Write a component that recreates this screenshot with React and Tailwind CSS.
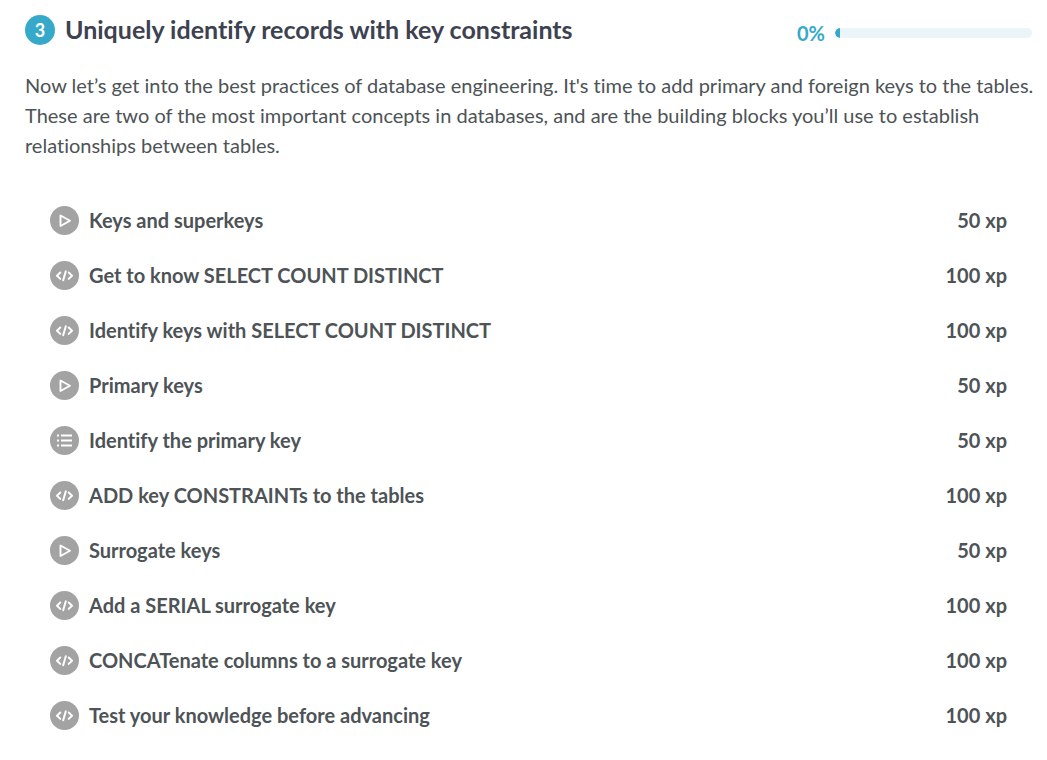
const exercises = [
  { kind: 'video', title: 'Keys and superkeys', xp: 50 },
  { kind: 'code', title: 'Get to know SELECT COUNT DISTINCT', xp: 100 },
  { kind: 'code', title: 'Identify keys with SELECT COUNT DISTINCT', xp: 100 },
  { kind: 'video', title: 'Primary keys', xp: 50 },
  { kind: 'list', title: 'Identify the primary key', xp: 50 },
  { kind: 'code', title: 'ADD key CONSTRAINTs to the tables', xp: 100 },
  { kind: 'video', title: 'Surrogate keys', xp: 50 },
  { kind: 'code', title: 'Add a SERIAL surrogate key', xp: 100 },
  { kind: 'code', title: 'CONCATenate columns to a surrogate key', xp: 100 },
  { kind: 'code', title: 'Test your knowledge before advancing', xp: 100 },
];

function ExerciseIcon({ kind }) {
  return (
    <svg className="h-[31px] w-[29px] shrink-0" viewBox="0 -2 29 31" fill="none" stroke="#fff" aria-hidden="true">
      <circle cx="14.5" cy="14.5" r="14.5" fill="#a3a3a3" stroke="none" />
      {kind === 'video' && <path d="M10.5 9.500v10.500l9.500-5.250z" strokeWidth="1.900" strokeLinejoin="round" />}
      {kind === 'code' && (
        <path d="M10.300 11.500 7 14.700l3.300 3.200M18.700 11.500l3.300 3.200-3.300 3.200M15.800 10.200l-2.600 9" strokeWidth="2" strokeLinecap="round" strokeLinejoin="round" />
      )}
      {kind === 'list' && <path d="M7 9.500h2M11 9.500h11M7 14.500h2M11 14.500h11M7 19.500h2M11 19.500h11" strokeWidth="1.800" />}
    </svg>
  );
}

export default function App() {
  return (
    <main className="bg-white pt-3 pl-[25px] font-['Lato',sans-serif] text-xl text-[#4d5356] [font-variant-ligatures:none]">
      <header className="flex items-center justify-between pr-[15px]">
        <div className="flex items-center gap-[10px]">
          <span className="flex size-[30px] items-center justify-center rounded-full bg-[#36a9ca] text-lg font-bold text-white">3</span>
          <h2 className="pb-0.5 text-[25px] leading-[34px] font-bold text-[#3d4251]">Uniquely identify records with key constraints</h2>
        </div>
        <div className="flex items-center gap-[10px] pt-1.5">
          <span className="font-bold text-[#36a9ca]">0%</span>
          <div role="progressbar" aria-label="Chapter progress" aria-valuenow={0} aria-valuemin={0} aria-valuemax={100} className="h-[10px] w-[197px] overflow-hidden rounded-full bg-[#ebf4f7]">
            <div className="h-full w-[5px] rounded-l-full bg-[#36a9ca]" />
          </div>
        </div>
      </header>
      <p className="mt-[22px] leading-[30px]">
        Now let’s get into the best practices of database engineering. It's time to add primary and foreign keys to the tables. These are two of the most important concepts in databases, and are the building blocks you’ll use to establish relationships between tables.
      </p>
      <ul className="mt-8 pr-10 pl-[25px]">
        {exercises.map((exercise) => (
          <li key={exercise.title}>
            <a href="#" className="flex h-[55px] items-center gap-[10px] font-bold">
              <ExerciseIcon kind={exercise.kind} />
              <span className="grow">{exercise.title}</span>
              <span>{exercise.xp} xp</span>
            </a>
          </li>
        ))}
      </ul>
    </main>
  );
}
